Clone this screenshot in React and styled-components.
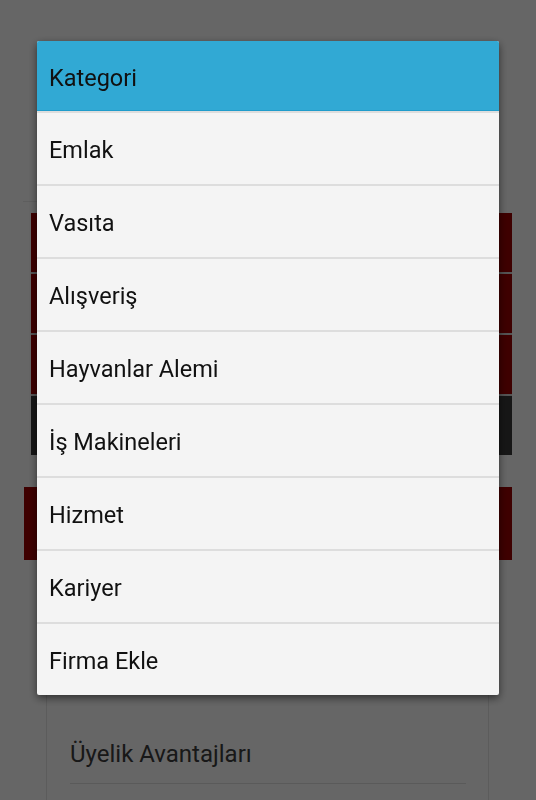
import React from "react";
import styled, { createGlobalStyle } from "styled-components";

const categories = [
  "Emlak",
  "Vasıta",
  "Alışveriş",
  "Hayvanlar Alemi",
  "İş Makineleri",
  "Hizmet",
  "Kariyer",
  "Firma Ekle",
];

const GlobalStyle = createGlobalStyle`
  html, body {
    margin: 0;
    padding: 0;
    background: #ffffff;
    font-family: Roboto, "Liberation Sans", sans-serif;
  }
`;

const Page = styled.div`
  width: 536px;
  height: 800px;
  overflow: hidden;
  background: #ffffff;
  display: flex;
  flex-direction: column;
`;

const TopArea = styled.div`
  height: 201px;
  margin: 0 37px 0 23px;
  border-bottom: 1px solid #ebebeb;
  flex-shrink: 0;
`;

const MenuBlock = styled.div`
  margin: 11px 24px 0 31px;
  display: flex;
  flex-direction: column;
  gap: 2px;
  background: #d4d4d4;
`;

const MenuBar = styled.div`
  height: 59px;
  background: ${(p) => (p.dark ? "#393939" : "#9b0000")};
`;

const Banner = styled.div`
  margin: 32px 24px 0 24px;
  height: 73px;
  background: #9b0000;
  flex-shrink: 0;
`;

const Card = styled.div`
  margin: 20px 47px 0 46px;
  border: 1px solid #e6e6e6;
  border-bottom: none;
  padding: 150px 22px 0 23px;
  flex: 1;
`;

const CardRow = styled.div`
  height: 52px;
  line-height: 46px;
  font-size: 24px;
  color: #3c3c3c;
  border-bottom: 1px solid #e2e2e2;
`;

const Scrim = styled.div`
  position: fixed;
  inset: 0;
  background: rgba(0, 0, 0, 0.6);
  display: flex;
  justify-content: center;
  align-items: flex-start;
  padding-top: 41px;
`;

const Dialog = styled.div`
  width: 462px;
  background: #f4f4f4;
  border-radius: 2px;
  overflow: hidden;
  box-shadow: 0 3px 8px rgba(0, 0, 0, 0.55);
`;

const DialogTitle = styled.div`
  height: 70px;
  box-sizing: border-box;
  padding: 4px 0 0 12px;
  display: flex;
  align-items: center;
  background: #31a9d4;
  border-bottom: 1px solid #1f9ccb;
  font-size: 23.5px;
  color: #111111;
`;

const Option = styled.div`
  height: 73px;
  box-sizing: border-box;
  padding: 3px 0 0 12px;
  display: flex;
  align-items: center;
  border-top: 2px solid #dddddd;
  font-size: 23.5px;
  color: #111111;
`;

const App = () => {
  return (
    <>
      <GlobalStyle />
      <Page>
        <TopArea />
        <MenuBlock>
          <MenuBar />
          <MenuBar />
          <MenuBar />
          <MenuBar dark />
        </MenuBlock>
        <Banner />
        <Card>
          <CardRow>Üyelik Avantajları</CardRow>
        </Card>
      </Page>
      <Scrim>
        <Dialog>
          <DialogTitle>Kategori</DialogTitle>
          {categories.map((name) => (
            <Option key={name}>{name}</Option>
          ))}
        </Dialog>
      </Scrim>
    </>
  );
};

export default App;
